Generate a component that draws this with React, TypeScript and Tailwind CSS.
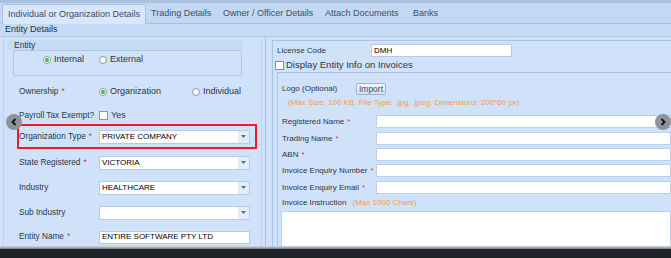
import React from "react";

const Req = () => <span className="text-[#e0323c] ml-[3px]">*</span>;

const Arrow = () => (
  <svg width="5" height="3" viewBox="0 0 5 3">
    <path d="M0 0 L5 0 L2.5 3 Z" fill="#5a6b85" />
  </svg>
);

const Select = ({ value }: { value: string }) => (
  <div className="w-[151px] h-[14px] bg-white border border-[#b5cbea] flex items-center">
    <span className="flex-1 pl-[2px] text-[8px] text-black leading-none">{value}</span>
    <span className="w-[11px] h-full bg-[#e3ecf9] flex items-center justify-center">
      <Arrow />
    </span>
  </div>
);

const Radio = ({ on }: { on?: boolean }) => (
  <span className="w-[8px] h-[8px] rounded-full border border-[#8b97a8] bg-white flex items-center justify-center">
    {on && <span className="w-[4px] h-[4px] rounded-full bg-[#3dbb3d]" />}
  </span>
);

const LeftRow = ({
  label,
  req,
  children,
  red,
  mt,
}: {
  label: string;
  req?: boolean;
  children: React.ReactNode;
  red?: boolean;
  mt: string;
}) => (
  <div
    className={`${mt} ml-[13px] w-[240px] border-2 ${red ? "border-[#ee1c25] h-[26px]" : "border-transparent h-[18px]"} flex items-center`}
  >
    <div className="w-[80px] text-[8.25px] text-[#2b3546] whitespace-nowrap">
      {label}
      {req && <Req />}
    </div>
    {children}
  </div>
);

const Input = ({ value, w }: { value?: string; w?: string }) => (
  <div className={`${w ?? "flex-1"} h-[13px] bg-white border border-[#b5cbea] flex items-center pl-[2px] text-[8px] text-black`}>
    {value}
  </div>
);

const RightRow = ({ label, mt }: { label: string; mt: string }) => (
  <div className={`${mt} h-[13px] flex items-center`}>
    <div className="w-[94px] text-[8px] text-[#2b3546] whitespace-nowrap">
      {label}
      <Req />
    </div>
    <div className="flex-1 h-[13px] bg-white border border-[#bad0ef]" />
  </div>
);

export default function App() {
  return (
    <div className="w-[671px] h-[258px] overflow-hidden relative bg-[#d0e2fa] font-['Liberation_Sans',Arial,sans-serif] flex flex-col">
      <div className="h-[3px] bg-[#a9c0de]" />
      <div className="h-[21px] bg-[#c3d8f3] border-b border-[#a6c0e3] flex items-end pl-[2px] text-[9px] text-[#3d4d68]">
        <div className="w-[144px] h-[20px] -mb-px bg-[#d8e7fb] border border-b-0 border-[#a6c0e3] rounded-t-[2px] flex items-center pl-[5px]">
          Individual or Organization Details
        </div>
        <div className="w-[72px] h-[19px] flex items-center pl-[5px]">Trading Details</div>
        <div className="w-[102px] h-[19px] flex items-center pl-[5px]">Owner / Officer Details</div>
        <div className="w-[88px] h-[19px] flex items-center pl-[5px]">Attach Documents</div>
        <div className="h-[19px] flex items-center pl-[5px]">Banks</div>
      </div>
      <div className="h-[13px] bg-[#c5daf5] border-b border-[#aec7e8] flex items-center pl-[5px] text-[9px] text-[#26324a]">
        Entity Details
      </div>

      <div className="h-[209px] flex overflow-hidden">
        {/* left */}
        <div className="flex h-full">
          <div className="w-[3px]" />
          <div className="w-px bg-[#bcd3f1]" />
          <div className="w-[258px] border-r border-[#bcd3f1] flex flex-col">
            <div className="mt-[3px] ml-[4px] w-[234px] h-[10px] bg-[#c6dbf6] flex items-center pl-[6px] text-[8.5px] text-[#26324a]">
              Entity
            </div>
            <div className="ml-[9px] w-[229px] h-[28px] border border-[#aec6e6] rounded-[2px] pt-[4px]">
              <div className="flex items-center h-[9px] text-[9px] text-[#2b3546]">
                <span className="ml-[29px]"><Radio on /></span>
                <span className="ml-[3px]">Internal</span>
                <span className="ml-[15px]"><Radio /></span>
                <span className="ml-[3px]">External</span>
              </div>
            </div>
            <LeftRow label="Ownership" req mt="mt-[7px]">
              <div className="flex items-center text-[9px] text-[#2b3546]">
                <Radio on />
                <span className="ml-[3px]">Organization</span>
                <span className="ml-[31px]"><Radio /></span>
                <span className="ml-[3px]">Individual</span>
              </div>
            </LeftRow>
            <LeftRow label="Payroll Tax Exempt?" mt="mt-[6px]">
              <div className="flex items-center text-[9px] text-[#2b3546]">
                <span className="w-[9px] h-[9px] bg-white border border-[#8b97a8]" />
                <span className="ml-[3px]">Yes</span>
              </div>
            </LeftRow>
            <LeftRow label="Organization Type" req red mt="mt-0">
              <Select value="PRIVATE COMPANY" />
            </LeftRow>
            <LeftRow label="State Registered" req mt="mt-[5px]">
              <Select value="VICTORIA" />
            </LeftRow>
            <LeftRow label="Industry" mt="mt-[7px]">
              <Select value="HEALTHCARE" />
            </LeftRow>
            <LeftRow label="Sub Industry" mt="mt-[7px]">
              <Select value="" />
            </LeftRow>
            <LeftRow label="Entity Name" req mt="mt-[7px]">
              <Input value="ENTIRE SOFTWARE PTY LTD" w="w-[151px]" />
            </LeftRow>
          </div>
          <div className="w-[3px]" />
          <div className="w-px bg-[#a6c0e3]" />
        </div>

        {/* right */}
        <div className="flex-1 flex flex-col pl-[6px]">
          <div className="mt-[3px] flex-1 border-l border-t border-[#a9c3e6] flex flex-col pl-[4px]">
            <div className="mt-[3px] h-[13px] flex items-center">
              <div className="w-[94px] text-[8px] text-[#2b3546]">License Code</div>
              <Input value="DMH" w="w-[141px]" />
            </div>
            <div className="mt-[3px] h-[10px] flex items-center -ml-[2px]">
              <span className="w-[9px] h-[9px] bg-white border border-[#7f8ba0]" />
              <span className="ml-[2px] text-[9.5px] text-[#2b3546]">Display Entity Info on Invoices</span>
            </div>
            <div className="mt-[2px] flex-1 border-l border-t border-[#a9c3e6] flex flex-col pl-[4px]">
              <div className="mt-[10px] h-[12px] flex items-center">
                <div className="w-[74px] text-[8px] text-[#2b3546]">Logo (Optional)</div>
                <div className="w-[30px] h-[12px] border border-[#9fb3cf] rounded-[2px] bg-gradient-to-b from-[#f2f6fc] to-[#d6e2f2] flex items-center justify-center text-[8.5px] text-[#3d4d68]">
                  Import
                </div>
              </div>
              <div className="mt-[3px] h-[10px] flex items-center pl-[6px] text-[8px] text-[#f39a4c] whitespace-nowrap">
                (Max Size: 100 KB, File Type: .jpg, .jpeg, Dimensions: 200*60 px)
              </div>
              <RightRow label="Registered Name" mt="mt-[7px]" />
              <RightRow label="Trading Name" mt="mt-[4px]" />
              <RightRow label="ABN" mt="mt-[3px]" />
              <RightRow label="Invoice Enquiry Number" mt="mt-[3px]" />
              <RightRow label="Invoice Enquiry Email" mt="mt-[4px]" />
              <div className="mt-[4px] h-[10px] flex items-center text-[8px] whitespace-nowrap">
                <span className="text-[#2b3546]">Invoice Instruction</span>
                <span className="ml-[6px] text-[#f39a4c]">(Max 1000 Chars)</span>
              </div>
              <div className="mt-[3px] -ml-[1px] h-[40px] bg-white border border-[#bad0ef]" />
            </div>
          </div>
        </div>
      </div>

      <div className="h-[3px] bg-gradient-to-b from-[#d9dde2] to-[#7b8087]" />
      <div className="h-[9px] bg-[#1f2226]" />

      <div className="absolute left-[6px] top-[114px] w-[16px] h-[16px] rounded-full bg-[#8c939b] flex items-center justify-center">
        <svg width="6" height="8" viewBox="0 0 6 8">
          <path d="M4.5 1 L1.5 4 L4.5 7" stroke="#111" strokeWidth="1.8" fill="none" />
        </svg>
      </div>
      <div className="absolute left-[655px] top-[114px] w-[16px] h-[16px] rounded-full bg-[#8c939b] flex items-center justify-center">
        <svg width="6" height="8" viewBox="0 0 6 8">
          <path d="M1.5 1 L4.5 4 L1.5 7" stroke="#111" strokeWidth="1.8" fill="none" />
        </svg>
      </div>
    </div>
  );
}
